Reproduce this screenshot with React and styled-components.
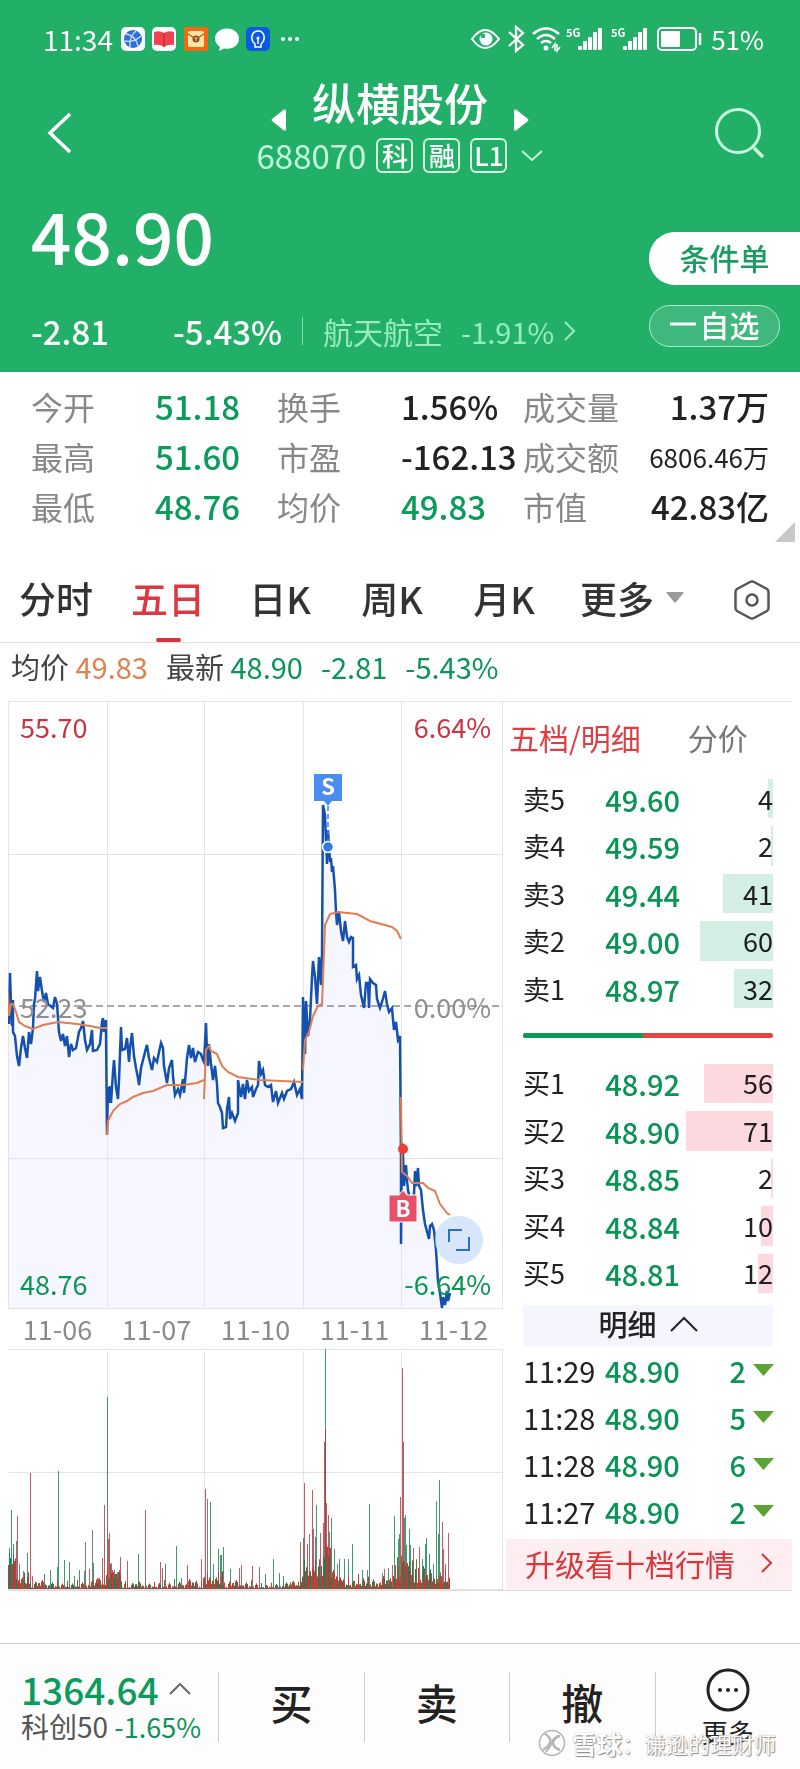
import styled, { createGlobalStyle } from "styled-components";

const stats = [
  [
    ["今开", "51.18", "down"],
    ["换手", "1.56%"],
    ["成交量", "1.37万"],
  ],
  [
    ["最高", "51.60", "down"],
    ["市盈", "-162.13"],
    ["成交额", "6806.46万", "small"],
  ],
  [
    ["最低", "48.76", "down"],
    ["均价", "49.83", "down"],
    ["市值", "42.83亿"],
  ],
];

const periods = ["分时", "五日", "日K", "周K", "月K"];

const asks = [
  ["卖5", "49.60", 4],
  ["卖4", "49.59", 2],
  ["卖3", "49.44", 41],
  ["卖2", "49.00", 60],
  ["卖1", "48.97", 32],
];

const bids = [
  ["买1", "48.92", 56],
  ["买2", "48.90", 71],
  ["买3", "48.85", 2],
  ["买4", "48.84", 10],
  ["买5", "48.81", 12],
];

const ticks = [
  ["11:29", "48.90", 2],
  ["11:28", "48.90", 5],
  ["11:28", "48.90", 6],
  ["11:27", "48.90", 2],
];

const dates = ["11-06", "11-07", "11-10", "11-11", "11-12"];
const dayLines = [99, 196, 295, 393];

const priceLine =
  "0,291 1,322 2,271 3,302 4,324 5,298 5,330 7,334 9,354 11,364 13,346 15,334 17,346 19,356 21,330 23,342 25,326 26,302 27,297 29,269 30,289 32,275 34,289 36,300 38,291 40,302 45,306 47,295 49,302 51,330 53,339 55,332 57,344 59,334 61,355 63,342 65,348 68,346 71,330 73,326 75,319 77,338 79,348 82,342 84,328 85,349 89,348 92,342 94,320 95,316 96,330 98,318 98,326 " +
  "99,433 100,385 101,401 102,384 103,401 105,370 106,358 108,385 110,397 111,378 113,325 114,348 117,347 119,336 121,360 122,346 124,331 126,354 128,366 130,376 131,383 133,366 136,354 138,346 139,343 141,356 144,368 146,356 149,360 151,350 153,341 155,346 156,364 159,381 161,366 164,358 165,374 167,393 170,387 172,393 175,377 176,391 178,368 179,356 181,343 183,356 185,346 187,360 190,350 193,352 195,358 196,360 198,321 " +
  "199,350 200,364 201,342 203,362 205,378 207,364 209,382 210,401 212,405 214,411 215,426 218,425 219,407 221,395 222,417 224,411 227,419 230,411 230,378 233,395 235,382 237,397 239,378 241,389 244,385 245,395 248,387 250,383 251,359 253,372 255,368 257,383 260,385 263,383 265,400 268,389 270,401 274,391 276,397 279,389 283,387 286,380 289,393 292,387 294,397 " +
  "295,295 297,352 298,299 300,334 302,318 304,275 305,259 307,275 309,302 311,255 313,283 314,251 315,103 317,113 318,138 319,162 320,128 322,160 323,156 324,170 325,164 327,188 328,210 329,223 331,210 333,229 335,239 337,219 339,235 341,240 343,235 345,236 345,265 348,263 349,277 351,273 353,293 356,306 358,281 360,281 361,306 362,277 365,281 368,283 369,297 372,306 374,300 377,289 379,302 381,310 384,306 386,328 388,320 390,338 392,334 393,457 " +
  "393,542 394,441 395,453 396,484 398,463 399,478 400,488 404,508 406,492 407,469 408,484 410,466 411,484 413,488 415,508 417,522 421,537 422,524 424,522 426,528 428,548 430,579 432,591 434,606 435,595 437,603 439,589 440,599 442,591";

const averageLines = [
  "0,291 1,314 3,302 5,302 8,310 11,320 17,324 25,327 35,323 50,320 69,322 82,324 92,326 99,326",
  "99,433 100,419 105,409 112,402 119,399 125,395 135,391 145,389 159,383 175,383 189,381 196,378",
  "196,397 198,348 201,344 203,349 209,352 214,364 220,370 230,375 252,378 295,380",
  "295,368 297,338 301,330 305,314 310,304 314,302 316,251 317,223 322,212 330,210 349,212 362,219 384,225 389,229 393,237",
  "393,395 394,470 399,474 404,481 415,481 420,486 427,489 432,502 439,511 442,513",
];

const volumeColors = { g: "#12804f", r: "#b5323c", n: "#5b6057" };

// [x, height, colour]
const peaks = [
  [1, 41, "g"], [3, 79, "g"], [5, 45, "g"], [8, 48, "n"], [9, 73, "r"], [11, 25, "g"], [15, 18, "r"], [19, 36, "g"],
  [22, 116, "r"], [24, 13, "r"], [36, 15, "g"], [42, 19, "g"], [49, 22, "g"], [50, 118, "g"], [56, 29, "g"],
  [61, 27, "g"], [66, 13, "g"], [71, 19, "g"], [76, 18, "g"], [77, 47, "n"], [81, 20, "r"], [84, 59, "n"],
  [85, 26, "g"], [89, 11, "r"], [94, 31, "r"], [96, 84, "r"], [99, 192, "g"], [100, 50, "r"], [101, 56, "r"],
  [103, 26, "n"], [106, 19, "r"], [109, 17, "g"], [112, 32, "r"], [119, 28, "r"], [130, 35, "g"], [137, 79, "r"],
  [152, 27, "r"], [154, 21, "r"], [157, 25, "g"], [168, 43, "g"], [173, 11, "g"], [179, 24, "r"], [193, 30, "r"],
  [197, 100, "r"], [199, 90, "n"], [202, 87, "g"], [205, 25, "g"], [210, 40, "g"], [212, 34, "g"], [213, 34, "g"],
  [215, 42, "g"], [222, 20, "g"], [231, 21, "r"], [233, 24, "r"], [244, 23, "r"], [251, 22, "r"], [257, 15, "g"],
  [265, 30, "g"], [271, 16, "g"], [275, 13, "g"], [292, 47, "r"], [295, 51, "g"], [296, 106, "r"], [299, 45, "r"],
  [301, 55, "r"], [304, 99, "r"], [305, 60, "r"], [307, 52, "n"], [308, 84, "g"], [312, 56, "r"], [315, 66, "r"],
  [316, 147, "r"], [317, 240, "g"], [317, 160, "r"], [318, 86, "r"], [320, 74, "r"], [321, 57, "g"], [323, 71, "g"],
  [326, 40, "g"], [329, 25, "n"], [331, 30, "g"], [336, 30, "g"], [340, 30, "g"], [344, 45, "g"], [354, 19, "g"],
  [359, 19, "n"], [361, 85, "g"], [374, 16, "g"], [376, 20, "r"], [380, 21, "g"], [384, 24, "r"], [386, 73, "g"],
  [390, 50, "g"], [391, 55, "g"], [392, 92, "r"], [394, 221, "r"], [395, 147, "r"], [396, 71, "g"], [397, 74, "g"],
  [398, 44, "g"], [401, 60, "g"], [402, 44, "g"], [405, 41, "r"], [411, 42, "r"], [414, 30, "g"], [417, 45, "g"],
  [418, 51, "g"], [421, 35, "g"], [425, 25, "g"], [428, 88, "g"], [430, 55, "g"], [431, 109, "g"], [434, 67, "r"],
  [435, 40, "r"], [437, 25, "r"], [440, 56, "r"], [441, 11, "r"],
];

// [from, to, base, spread] of the low bars between the peaks
const volumeBands = [
  [0, 8, 24, 12], [8, 22, 5, 12], [22, 50, 1, 9], [50, 88, 1, 9], [88, 99, 4, 10], [99, 113, 10, 16],
  [113, 150, 1, 7], [150, 196, 1, 10], [196, 216, 4, 14], [216, 250, 1, 9], [250, 282, 1, 6], [282, 294, 3, 7],
  [294, 315, 12, 18], [315, 323, 30, 20], [323, 334, 8, 12], [334, 346, 2, 12], [346, 360, 3, 15],
  [360, 385, 2, 12], [385, 393, 10, 22], [393, 402, 22, 12], [402, 418, 6, 24], [418, 432, 5, 16], [432, 442, 4, 20],
];

const lowBars = volumeBands.flatMap(([from, to, base, spread]) =>
  Array.from({ length: to - from }, (_, i) => {
    const x = from + i;
    const noise = ((x * 7919 + x * x * 131) % 97) / 97;
    const color = (x * 37 + x * x * 11) % 7 < 4 ? "#c8363b" : (x % 3 ? "#14834f" : "#736a3c");
    return { x, height: base + spread * Math.pow(noise, 1.4), color };
  })
);

function Quote() {
  return (
    <Header>
      <StatusBar>
        <StatusGroup>
          <Clock>11:34</Clock>
          <AppIcons />
        </StatusGroup>
        <StatusGroup>
          <SignalIcons />
          <Battery>51%</Battery>
        </StatusGroup>
      </StatusBar>
      <TitleBar>
        <IconButton aria-label="返回">
          <svg width="26" height="44" viewBox="0 0 26 44" fill="none" stroke="#fff" strokeWidth="3.5">
            <path d="M23 3 L3 22 L23 41" />
          </svg>
        </IconButton>
        <TitleBlock>
          <TitleRow>
            <ArrowButton aria-label="上一只">
              <svg width="15" height="22" viewBox="0 0 15 22" fill="#fff">
                <path d="M1 10 L13 0.5 Q15 0 15 2 V20 Q15 22 13 21.5 L1 12 Q0 11 1 10Z" />
              </svg>
            </ArrowButton>
            <Title>纵横股份</Title>
            <ArrowButton aria-label="下一只">
              <svg width="15" height="22" viewBox="0 0 15 22" fill="#fff">
                <path d="M14 10 L2 0.5 Q0 0 0 2 V20 Q0 22 2 21.5 L14 12 Q15 11 14 10Z" />
              </svg>
            </ArrowButton>
          </TitleRow>
          <CodeRow>
            <Code>688070</Code>
            <Tag>科</Tag>
            <Tag>融</Tag>
            <Tag>L1</Tag>
            <Chevron width="22" height="12" viewBox="0 0 22 12">
              <path d="M1 1 L11 10 L21 1" />
            </Chevron>
          </CodeRow>
        </TitleBlock>
        <IconButton aria-label="搜索">
          <svg width="50" height="52" viewBox="0 0 50 52" fill="none" stroke="#c9fbe0" strokeWidth="3">
            <circle cx="23" cy="24" r="21.500" />
            <path d="M39 41 L48 50" strokeWidth="3.500" />
          </svg>
        </IconButton>
      </TitleBar>
      <PriceArea>
        <div>
          <Price>48.90</Price>
          <ChangeRow>
            <Change>-2.81</Change>
            <Change>-5.43%</Change>
            <Sector href="#sector">
              <span>航天航空</span>
              <span>-1.91%</span>
              <svg width="12" height="20" viewBox="0 0 12 20" fill="none" stroke="currentColor" strokeWidth="2">
                <path d="M1 1 L10 10 L1 19" />
              </svg>
            </Sector>
          </ChangeRow>
        </div>
        <Actions>
          <ConditionButton>条件单</ConditionButton>
          <WatchButton>
            <svg width="26" height="4" viewBox="0 0 26 4">
              <path d="M0 2 H26" stroke="#fff" strokeWidth="3" />
            </svg>
            自选
          </WatchButton>
        </Actions>
      </PriceArea>
    </Header>
  );
}

function AppIcons() {
  return (
    <svg width="180" height="26" viewBox="0 0 180 26">
      <rect x="0" y="1" width="24" height="24" rx="5" fill="#fff" />
      <circle cx="12" cy="13" r="9" fill="#2f6fdc" />
      <path d="M5 8 Q14 9 17 20 M9 21 Q8 10 15 5 M4 15 Q12 17 20 10" stroke="#cfe0ff" strokeWidth="1.300" fill="none" />
      <rect x="31" y="1" width="24" height="24" rx="5" fill="#fff" />
      <path d="M33 6 Q39 4 43 7 Q47 4 53 6 V19 Q47 18 43 21 Q39 18 33 19Z" fill="#f0424f" />
      <path d="M43 7 V21" stroke="#a92b38" strokeWidth="1" />
      <rect x="63" y="1" width="24" height="24" rx="1" fill="#f06a12" />
      <rect x="67" y="5" width="16" height="16" rx="2" fill="#fde6a8" />
      <path d="M67 8 L75 13 L83 8" stroke="#b85a10" strokeWidth="1.300" fill="none" />
      <circle cx="75" cy="13" r="3.500" fill="#8e4a13" />
      <path d="M73.500 12 H76.500 M75 12 V15" stroke="#fde6a8" strokeWidth="0.900" />
      <path d="M106 2.500 C99 2.500 94 7 94 12.500 C94 16 96 19 99 21 L98 25 L103 22.500 C112 24 118 19 118 12.500 C118 7 113 2.500 106 2.500Z" fill="#fff" />
      <rect x="125" y="1" width="24" height="24" rx="5" fill="#0a5be0" />
      <path d="M134 18 C129 14 130 5 137 5 C144 5 145 14 140 18 V21 H134Z M137 18 V12" stroke="#fff" strokeWidth="1.500" fill="none" />
      <circle cx="137" cy="12" r="1.600" fill="#fff" />
      <circle cx="162" cy="13" r="2" fill="#fff" />
      <circle cx="169" cy="13" r="2" fill="#fff" />
      <circle cx="176" cy="13" r="2" fill="#fff" />
    </svg>
  );
}

function Signal({ x }) {
  return (
    <g>
      <text x={x} y="12" fontSize="11" fontWeight="700" fill="#fff">
        5G
      </text>
      {[4, 9, 13, 18, 22].map((height, i) => (
        <rect key={height} x={x + 12 + i * 5} y={25 - height} width="4" height={height} rx="1" fill="#fff" />
      ))}
    </g>
  );
}

function SignalIcons() {
  return (
    <svg width="232" height="28" viewBox="0 0 232 28" fill="none" stroke="#fff">
      <path d="M1 14 Q14 -4 28 14 Q14 32 1 14Z" strokeWidth="2" />
      <circle cx="15" cy="14" r="6.500" fill="#fff" stroke="none" />
      <circle cx="12" cy="11" r="2.300" fill="#22b069" stroke="none" />
      <path d="M38 7 L52 20 L45 26 V2 L52 8 L38 21" strokeWidth="2.300" />
      <path d="M62 9 Q75 -2 88 9 M66 14 Q75 6 84 14 M70 18 Q75 14 80 18" strokeWidth="2.600" />
      <circle cx="75" cy="23" r="2.500" fill="#fff" stroke="none" />
      <path d="M81 23 L84 19 V26 M86 19 V26 L89 22" strokeWidth="1.500" />
      <g stroke="none">
        <Signal x={95} />
        <Signal x={140} />
      </g>
      <rect x="187" y="3" width="38" height="22" rx="4" strokeWidth="2" />
      <rect x="190" y="6" width="19" height="16" rx="1" fill="#fff" stroke="none" />
      <path d="M229 8 V20" strokeWidth="2.500" />
    </svg>
  );
}

function PriceChart() {
  return (
    <ChartSvg viewBox="0 0 495 607">
      <polygon points={`0,607 ${priceLine} 442,607`} fill="#f6f6fe" />
      <Grid>
        <path d="M0.500 0 V607 M0 152.500 H495 M0 456.500 H495 M0 606.500 H495 M494.500 0 V607" />
        {dayLines.map((x) => (
          <path key={x} d={`M${x}.500 0 V607`} />
        ))}
      </Grid>
      <path d="M0 304 H495" stroke="#8c8c8c" strokeWidth="1.500" strokeDasharray="7 4" />
      <polyline points={priceLine} fill="none" stroke="#1450ad" strokeWidth="2.500" />
      {averageLines.map((points) => (
        <polyline key={points} points={points} fill="none" stroke="#e17d50" strokeWidth="2" />
      ))}
      <AxisText x="12" y="36" fill="#c93440">55.70</AxisText>
      <AxisText x="483" y="36" textAnchor="end" fill="#c93440">6.64%</AxisText>
      <AxisText x="12" y="316" fill="#8f8f8f">52.23</AxisText>
      <AxisText x="483" y="316" textAnchor="end" fill="#8f8f8f">0.00%</AxisText>
      <AxisText x="12" y="593" fill="#0b9456">48.76</AxisText>
      <AxisText x="483" y="593" textAnchor="end" fill="#0b9456">-6.64%</AxisText>
      <path d="M320 104 V140" stroke="#3d82ea" strokeWidth="1.500" strokeDasharray="5 3" />
      <path d="M306 72 H334 V99 H324 L320 104 L316 99 H306Z" fill="#4a8df0" />
      <MarkerText x="320" y="93">S</MarkerText>
      <circle cx="320" cy="145" r="5.500" fill="#2f7be6" stroke="#fff" strokeWidth="1.500" />
      <path d="M381 493 H391 L395 488 L399 493 H409 V520 H381Z" fill="#e8506a" stroke="#fff" strokeWidth="1" />
      <MarkerText x="395" y="515">B</MarkerText>
      <circle cx="395" cy="447" r="5" fill="#ee3b34" />
    </ChartSvg>
  );
}

function VolumeChart() {
  return (
    <ChartSvg viewBox="0 0 495 241">
      <Grid>
        <path d="M0 0.500 H495 M0 123.500 H495 M0 240.500 H495 M494.500 0 V241" />
        {dayLines.map((x) => (
          <path key={x} d={`M${x}.500 2 V240`} />
        ))}
      </Grid>
      {peaks.map(([x, height, color]) => (
        <rect
          key={`${x}-${height}`}
          x={x}
          y={240 - height}
          width="1"
          height={height}
          fill={volumeColors[color]}
          opacity="0.800"
        />
      ))}
      {lowBars.map(({ x, height, color }) => (
        <rect key={x} x={x} y={240 - height} width="1" height={height} fill={color} />
      ))}
    </ChartSvg>
  );
}

function BookRow({ row, side }) {
  const [label, price, amount] = row;
  return (
    <Level>
      <span>{label}</span>
      <LevelPrice>{price}</LevelPrice>
      <Amount>{amount}</Amount>
      <DepthBar $side={side} style={{ width: `${amount * 0.49}%` }} />
    </Level>
  );
}

function OrderBook() {
  return (
    <Side>
      <SideTabs>
        <SideTab $active>五档/明细</SideTab>
        <SideTab>分价</SideTab>
      </SideTabs>
      <Levels>
        {asks.map((row) => (
          <BookRow key={row[0]} row={row} side="ask" />
        ))}
        <Level>
          <Ratio>
            <span />
          </Ratio>
        </Level>
        {bids.map((row) => (
          <BookRow key={row[0]} row={row} side="bid" />
        ))}
      </Levels>
      <DetailToggle>
        明细
        <svg width="28" height="16" viewBox="0 0 28 16" fill="none" stroke="#222" strokeWidth="2">
          <path d="M1 15 L14 2 L27 15" />
        </svg>
      </DetailToggle>
      <TickTable>
        <tbody>
          {ticks.map(([time, price, amount], i) => (
            <tr key={i}>
              <td>{time}</td>
              <td>{price}</td>
              <td>
                {amount}
                <svg width="21" height="12" viewBox="0 0 21 12">
                  <path d="M0 0 H21 L10.500 12Z" fill="#5ca336" />
                </svg>
              </td>
            </tr>
          ))}
        </tbody>
      </TickTable>
      <Upgrade href="#upgrade">
        升级看十档行情
        <svg width="12" height="20" viewBox="0 0 12 20" fill="none" stroke="currentColor" strokeWidth="2">
          <path d="M1 1 L10 10 L1 19" />
        </svg>
      </Upgrade>
    </Side>
  );
}

export default function App() {
  return (
    <Page>
      <GlobalStyle />
      <Quote />
      <Stats>
        {stats.flat().map(([label, value, kind]) => (
          <Stat key={label + value}>
            <dt>{label}</dt>
            <StatValue $kind={kind}>{value}</StatValue>
          </Stat>
        ))}
        <Corner width="20" height="20" viewBox="0 0 20 20">
          <path d="M20 0 V20 H0Z" fill="#c8c8c8" />
        </Corner>
      </Stats>
      <Tabs>
        {periods.map((name) => (
          <Tab key={name} $active={name === "五日"}>
            {name}
          </Tab>
        ))}
        <MoreTab>
          更多
          <svg width="18" height="11" viewBox="0 0 18 11">
            <path d="M1 0 H17 Q18 0 17.500 1 L10 10 Q9 11 8 10 L0.500 1 Q0 0 1 0Z" fill="#9a9a9a" />
          </svg>
        </MoreTab>
        <SettingsButton aria-label="设置">
          <svg width="36" height="40" viewBox="0 0 36 40" fill="none" stroke="#555" strokeWidth="2.500">
            <path d="M16 2 Q18 1 20 2 L33 9 Q34.500 10 34.500 12 V28 Q34.500 30 33 31 L20 38 Q18 39 16 38 L3 31 Q1.500 30 1.500 28 V12 Q1.500 10 3 9Z" />
            <circle cx="18" cy="20" r="5.500" />
          </svg>
        </SettingsButton>
      </Tabs>
      <Summary>
        <span>
          均价 <em>49.83</em>
        </span>
        <span>
          最新 <strong>48.90</strong>
        </span>
        <strong>-2.81</strong>
        <strong>-5.43%</strong>
      </Summary>
      <Board>
        <Charts>
          <PriceChart />
          <ExpandButton aria-label="放大">
            <svg width="24" height="24" viewBox="0 0 24 24" fill="none" stroke="#2a6fd0" strokeWidth="2">
              <path d="M2 14 V2 H15 M22 9 V22 H9" />
            </svg>
          </ExpandButton>
          <Dates>
            {dates.map((date) => (
              <span key={date}>{date}</span>
            ))}
          </Dates>
          <VolumeChart />
        </Charts>
        <OrderBook />
      </Board>
      <Footer>
        <IndexButton>
          <IndexValue>
            1364.64
            <svg width="22" height="12" viewBox="0 0 22 12" fill="none" stroke="#666" strokeWidth="2">
              <path d="M1 11 L11 1 L21 11" />
            </svg>
          </IndexValue>
          <IndexName>
            科创50 <strong>-1.65%</strong>
          </IndexName>
        </IndexButton>
        <TradeButton>买</TradeButton>
        <TradeButton>卖</TradeButton>
        <TradeButton>撤</TradeButton>
        <MoreButton>
          <svg width="44" height="44" viewBox="0 0 44 44" fill="none" stroke="#222" strokeWidth="3">
            <circle cx="22" cy="22" r="20" />
            <g fill="#222" stroke="none">
              <circle cx="14" cy="22" r="2" />
              <circle cx="22" cy="22" r="2" />
              <circle cx="30" cy="22" r="2" />
            </g>
          </svg>
          更多
        </MoreButton>
        <Watermark>
          <svg width="28" height="28" viewBox="0 0 28 28" fill="none" stroke="#b4b4b4" strokeWidth="1.500">
            <circle cx="14" cy="14" r="12.500" fill="#fff" fillOpacity="0.600" />
            <path d="M7 5 Q14 9 12 14 Q10 18 5 21 M22 7 Q14 9 15 14 Q16 19 22 21" strokeWidth="2.500" />
            <path d="M20 6 L8 23" strokeWidth="2" />
          </svg>
          <b>雪球</b>：谦逊的理财师
        </Watermark>
      </Footer>
    </Page>
  );
}

const GlobalStyle = createGlobalStyle`
  body {
    margin: 0;
    background: #fff;
  }
  * {
    box-sizing: border-box;
  }
  button {
    padding: 0;
    border: 0;
    background: none;
    color: inherit;
    font: inherit;
    cursor: pointer;
  }
  a {
    color: inherit;
    text-decoration: none;
  }
  svg {
    display: block;
    flex: none;
  }
`;

const Page = styled.main`
  font-family: "Noto Sans CJK SC", "Noto Sans", sans-serif;
  color: #222;
  white-space: nowrap;
`;
const Header = styled.header`
  background: #22b069;
  color: #fff;
`;
const StatusBar = styled.div`
  display: flex;
  justify-content: space-between;
  align-items: center;
  height: 78px;
  padding: 0 36px 0 43px;
`;
const StatusGroup = styled.div`
  display: flex;
  align-items: center;
  gap: 8px;
`;
const Clock = styled.span`
  font-size: 28px;
  line-height: 28px;
`;
const Battery = styled(Clock)`
  font-size: 26px;
`;
const TitleBar = styled.div`
  display: flex;
  justify-content: space-between;
  align-items: flex-start;
  padding: 0 28px;
`;
const IconButton = styled.button`
  display: flex;
  align-items: center;
  justify-content: center;
  width: 64px;
  height: 110px;
`;
const TitleBlock = styled.div`
  display: flex;
  flex-direction: column;
  align-items: center;
  gap: 11px;
`;
const TitleRow = styled.div`
  display: flex;
  gap: 26px;
`;
const ArrowButton = styled.button`
  align-self: flex-end;
  margin-bottom: -4px;
`;
const Title = styled.h1`
  margin: 0;
  font-size: 44px;
  font-weight: 500;
  line-height: 49px;
`;
const CodeRow = styled.div`
  display: flex;
  align-items: center;
  gap: 10px;
  height: 35px;
`;
const Code = styled.span`
  color: #c4f9dc;
  font-size: 33px;
  line-height: 33px;
`;
const Tag = styled.span`
  width: 37px;
  height: 35px;
  border: 2px solid #d3f7e4;
  border-radius: 6px;
  font-size: 26px;
  font-weight: 500;
  line-height: 29px;
  text-align: center;
`;
const Chevron = styled.svg`
  margin-left: 4px;
  fill: none;
  stroke: #c4f9dc;
  stroke-width: 2;
`;
const PriceArea = styled.div`
  display: flex;
  justify-content: space-between;
  height: 184px;
  padding-left: 31px;
`;
const Price = styled.div`
  margin-top: 6px;
  font-size: 71px;
  font-weight: 500;
  line-height: 80px;
`;
const ChangeRow = styled.div`
  display: flex;
  align-items: center;
  height: 40px;
  margin-top: 37px;
`;
const Change = styled.span`
  margin-right: 64px;
  font-size: 33px;
  font-weight: 500;

  & + & {
    margin-right: 20px;
  }
`;
const Sector = styled.a`
  display: flex;
  align-items: center;
  gap: 10px;
  padding-left: 20px;
  border-left: 1px solid #7fdcab;
  color: #96ebbf;
  font-size: 30px;
  line-height: 28px;

  span + span {
    margin-left: 8px;
    font-size: 29px;
  }
`;
const Actions = styled.div`
  display: flex;
  flex-direction: column;
  gap: 20px;
  width: 151px;
  padding-top: 44px;
`;
const ConditionButton = styled.button`
  height: 53px;
  padding-bottom: 4px;
  border-radius: 26px 0 0 26px;
  background: #fff;
  color: #1b9c62;
  font-size: 30px;
  font-weight: 500;
`;
const WatchButton = styled.button`
  display: flex;
  align-items: center;
  justify-content: center;
  gap: 4px;
  height: 42px;
  margin-right: 20px;
  padding-bottom: 4px;
  border: 1px solid #a5ecc8;
  border-radius: 21px;
  background: #3fb87d;
  font-size: 30px;
  font-weight: 500;
  line-height: 36px;
`;
const Stats = styled.dl`
  position: relative;
  display: grid;
  grid-template-columns: repeat(3, 1fr);
  margin: 0;
  padding: 9px 31px 22px;
`;
const Stat = styled.div`
  display: flex;
  align-items: center;
  height: 50px;

  dt {
    width: 124px;
    color: #888;
    font-size: 32px;
  }

  &:nth-child(3n) {
    justify-content: space-between;
  }
`;
const StatValue = styled.dd`
  margin: 0;
  color: ${({ $kind }) => ($kind === "down" ? "#0b9b5a" : "#222")};
  font-size: ${({ $kind }) => ($kind === "small" ? "26px" : "33px")};
  font-weight: ${({ $kind }) => ($kind === "small" ? 400 : 500)};
`;
const Corner = styled.svg`
  position: absolute;
  right: 5px;
  bottom: 11px;
`;
const Tabs = styled.nav`
  display: flex;
  height: 90px;
  border-bottom: 1px solid #ddd;
`;
const Tab = styled.button`
  position: relative;
  flex: 112;
  color: ${({ $active }) => ($active ? "#de373f" : "#333")};
  font-size: 37px;
  font-weight: 500;

  &::after {
    content: "";
    position: absolute;
    bottom: 0;
    left: calc(50% - 12px);
    width: 25px;
    height: 4px;
    border-radius: 2px;
    background: ${({ $active }) => ($active ? "#d8343e" : "transparent")};
  }
`;
const MoreTab = styled.button`
  display: flex;
  flex: 144;
  align-items: center;
  justify-content: center;
  gap: 12px;
  color: #333;
  font-size: 37px;
  font-weight: 500;
`;
const SettingsButton = styled.button`
  display: flex;
  flex: 96;
  align-items: center;
  justify-content: center;
  padding-top: 4px;
`;
const Summary = styled.div`
  display: flex;
  gap: 18px;
  height: 58px;
  padding-left: 11px;
  color: #444;
  font-size: 29px;
  line-height: 46px;

  em {
    color: #dd834f;
    font-style: normal;
  }

  strong {
    color: #0b9456;
    font-weight: 400;
  }
`;
const Board = styled.section`
  display: grid;
  grid-template-columns: 495fr 289fr;
  margin: 0 8px;
  border-top: 1px solid #e4e4e4;
  border-bottom: 1px solid #ddd;
`;
const Charts = styled.div`
  position: relative;
`;
const ChartSvg = styled.svg`
  width: 100%;
  height: auto;
`;
const Grid = styled.g`
  fill: none;
  stroke: #e4e4e6;
`;
const AxisText = styled.text`
  font-size: 27px;
`;
const MarkerText = styled.text`
  fill: #fff;
  font-size: 22px;
  font-weight: 700;
  text-anchor: middle;
`;
const ExpandButton = styled.button`
  position: absolute;
  top: 514px;
  right: 20px;
  display: flex;
  align-items: center;
  justify-content: center;
  width: 48px;
  height: 48px;
  border-radius: 50%;
  background: rgba(205, 224, 250, 0.8);
`;
const Dates = styled.div`
  display: grid;
  grid-template-columns: repeat(5, 1fr);
  color: #8a8a8a;
  font-size: 27px;
  line-height: 40px;
  text-align: center;
`;
const Side = styled.div`
  display: flex;
  flex-direction: column;
`;
const SideTabs = styled.div`
  display: flex;
  gap: 47px;
  height: 69px;
  padding-left: 6px;
`;
const SideTab = styled.button`
  color: ${({ $active }) => ($active ? "#e03c41" : "#777")};
  font-size: 30px;
`;
const Levels = styled.div`
  display: flex;
  flex: 1;
  flex-direction: column;
  margin: 4px 19px 8px 20px;
`;
const Level = styled.div`
  position: relative;
  display: grid;
  flex: 1;
  grid-template-columns: 60px 97px 1fr;
  align-items: center;
  font-size: 27px;
  line-height: 40px;
`;
const LevelPrice = styled.span`
  color: #0b9456;
  font-size: 29px;
  font-weight: 500;
  text-align: right;
`;
const Amount = styled.span`
  text-align: right;
`;
const DepthBar = styled.i`
  position: absolute;
  top: 4px;
  right: 0;
  bottom: 4px;
  background: ${({ $side }) => ($side === "ask" ? "#d4eee3" : "#fcd9de")};
  mix-blend-mode: multiply;
`;
const Ratio = styled.div`
  grid-column: 1 / -1;
  height: 5px;
  border-radius: 3px;
  background: #e24448;

  span {
    display: block;
    width: 48%;
    height: 5px;
    border-radius: 3px 0 0 3px;
    background: #0b9b5a;
  }
`;
const DetailToggle = styled.button`
  display: flex;
  align-items: center;
  justify-content: center;
  gap: 13px;
  height: 41px;
  margin: 0 19px 0 20px;
  padding-bottom: 4px;
  background: #f5f5fd;
  font-size: 29px;
  font-weight: 500;
  line-height: 37px;
`;
const TickTable = styled.table`
  margin: 0 18px 5px 20px;
  border-collapse: collapse;
  font-size: 29px;
  line-height: 44px;

  td {
    height: 47px;
    padding: 0;
  }

  td:nth-child(1) {
    width: 82px;
  }

  td:nth-child(2) {
    color: #0b9456;
    font-weight: 500;
  }

  td:nth-child(3) {
    display: flex;
    align-items: center;
    justify-content: flex-end;
    gap: 7px;
    color: #0b9456;
    font-weight: 500;
  }
`;
const Upgrade = styled.a`
  display: flex;
  align-items: center;
  justify-content: space-between;
  height: 51px;
  margin-left: 3px;
  padding: 0 19px 4px 19px;
  background: #fdeef1;
  color: #d9363c;
  font-size: 30px;
  line-height: 46px;
`;
const Footer = styled.footer`
  position: relative;
  display: grid;
  grid-template-columns: 3fr 2fr 2fr 2fr 2fr;
  align-items: center;
  height: 126px;
  margin-top: 52px;
  border-top: 1px solid #ccc;
  background: #fefdfe;
`;
const IndexButton = styled.button`
  height: 70px;
  padding: 0 0 8px 21px;
  text-align: left;
`;
const IndexValue = styled.span`
  display: flex;
  align-items: center;
  gap: 10px;
  color: #0b9b5a;
  font-size: 37px;
  font-weight: 500;
  line-height: 34px;
`;
const IndexName = styled.span`
  display: block;
  color: #555;
  font-size: 28px;
  line-height: 40px;

  strong {
    color: #0b9456;
    font-size: 27px;
    font-weight: 400;
  }
`;
const TradeButton = styled.button`
  height: 70px;
  padding-bottom: 10px;
  border-left: 1px solid #ccc;
  font-size: 42px;
  font-weight: 500;
  line-height: 60px;
`;
const MoreButton = styled.button`
  display: flex;
  flex-direction: column;
  align-items: center;
  height: 70px;
  border-left: 1px solid #ccc;
  font-size: 26px;
  line-height: 40px;

  svg {
    margin-top: -4px;
  }
`;
const Watermark = styled.div`
  position: absolute;
  right: 24px;
  bottom: 10px;
  display: flex;
  align-items: center;
  color: #fff;
  font-size: 22px;
  line-height: 32px;
  text-shadow: 1px 1px 1px #888, 0 0 1px #999;

  b {
    margin-left: 6px;
    font-size: 25px;
  }
`;
